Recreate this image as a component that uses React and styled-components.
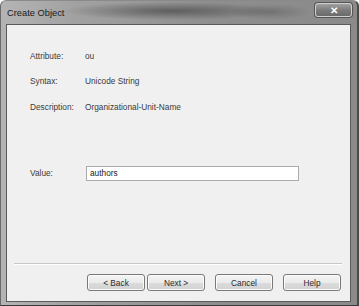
import React from 'react';
import styled, { createGlobalStyle } from 'styled-components';

const Global = createGlobalStyle`
  html, body { margin: 0; padding: 0; background: #fff; }
  body { font-family: "Liberation Sans", Arial, sans-serif; }
`;

const Frame = styled.div`
  width: 359px;
  height: 306px;
  box-sizing: border-box;
  display: flex;
  flex-direction: column;
  padding: 0 6px 3px 5px;
  background:
    radial-gradient(ellipse 110px 9px at 170px 10px, rgba(50,50,50,0.55), transparent),
    radial-gradient(ellipse 40px 8px at 270px 11px, rgba(60,60,60,0.3), transparent),
    linear-gradient(90deg, #b4b4b4 0%, #a2a2a2 20%, #8e8e8e 60%, #8a8a8a 100%);
  border-bottom: 1px solid #3a3a3a;
  border-right: 2px solid #4a4a4a;
  border-left: 1px solid #6a6a6a;
  border-top: 1px solid #8a8a8a;
  border-radius: 6px 6px 0 0;
`;

const TitleBar = styled.div`
  height: 23px;
  flex: none;
  display: flex;
  align-items: flex-start;
  justify-content: space-between;
`;

const Title = styled.div`
  margin-top: 7px;
  margin-left: 1px;
  font-size: 9.3px;
  color: #1a1a1a;
`;

const CloseButton = styled.div`
  margin-top: 2px;
  margin-right: -1px;
  width: 37px;
  height: 14px;
  box-sizing: border-box;
  border: 1px solid #d0d0d0;
  border-radius: 3px;
  background: linear-gradient(180deg, #a0a0a0 0%, #7c7c7c 50%, #6a6a6a 100%);
  display: flex;
  align-items: center;
  justify-content: center;
  color: #fff;
  font-size: 10px;
  font-weight: bold;
  box-shadow: 0 0 0 1px #555;
`;

const Client = styled.div`
  flex: 1;
  display: flex;
  flex-direction: column;
  background: #f0f0f0;
  border: 1px solid #5a5a5a;
  padding: 18px 0 0 0;
`;

const Field = styled.div`
  height: 25.5px;
  display: flex;
  align-items: center;
  padding-left: 23px;
  font-size: 8.3px;
  color: #3a3a3a;
  margin-top: ${p => p.$gap || 0}px;
`;

const Label = styled.span`
  width: 55px;
  flex: none;
`;

const Value = styled.span``;

const Input = styled.div`
  width: 213px;
  height: 15px;
  box-sizing: border-box;
  border: 1px solid #a9abb0;
  background: #fff;
  padding-left: 3px;
  display: flex;
  align-items: center;
  color: #222;
  margin-left: 1px;
`;

const Spacer = styled.div`
  flex: 1;
`;

const Separator = styled.div`
  height: 1px;
  margin: 0 8px 0 7px;
  background: #c8c8c8;
  border-bottom: 1px solid #fff;
`;

const ButtonRow = styled.div`
  display: flex;
  justify-content: flex-end;
  padding: 9px 9px 10px 0;
`;

const Button = styled.div`
  width: 58px;
  height: 17px;
  box-sizing: border-box;
  margin-left: ${p => p.$gap}px;
  border: 1px solid #7a7a7a;
  border-radius: 3px;
  background: linear-gradient(180deg, #f4f4f4 0%, #ebebeb 50%, #dcdcdc 51%, #d2d2d2 100%);
  box-shadow: inset 0 0 0 1px #fbfbfb;
  display: flex;
  align-items: center;
  justify-content: center;
  font-size: 8.3px;
  color: #2a2a2a;
`;

export default function App() {
  return (
    <>
      <Global />
      <Frame>
        <TitleBar>
          <Title>Create Object</Title>
          <CloseButton>✕</CloseButton>
        </TitleBar>
        <Client>
          <Field><Label>Attribute:</Label><Value>ou</Value></Field>
          <Field><Label>Syntax:</Label><Value>Unicode String</Value></Field>
          <Field><Label>Description:</Label><Value>Organizational-Unit-Name</Value></Field>
          <Field $gap={41}><Label>Value:</Label><Input>authors</Input></Field>
          <Spacer />
          <Separator />
          <ButtonRow>
            <Button $gap={0}>&lt; Back</Button>
            <Button $gap={2}>Next &gt;</Button>
            <Button $gap={10}>Cancel</Button>
            <Button $gap={10}>Help</Button>
          </ButtonRow>
        </Client>
      </Frame>
    </>
  );
}
